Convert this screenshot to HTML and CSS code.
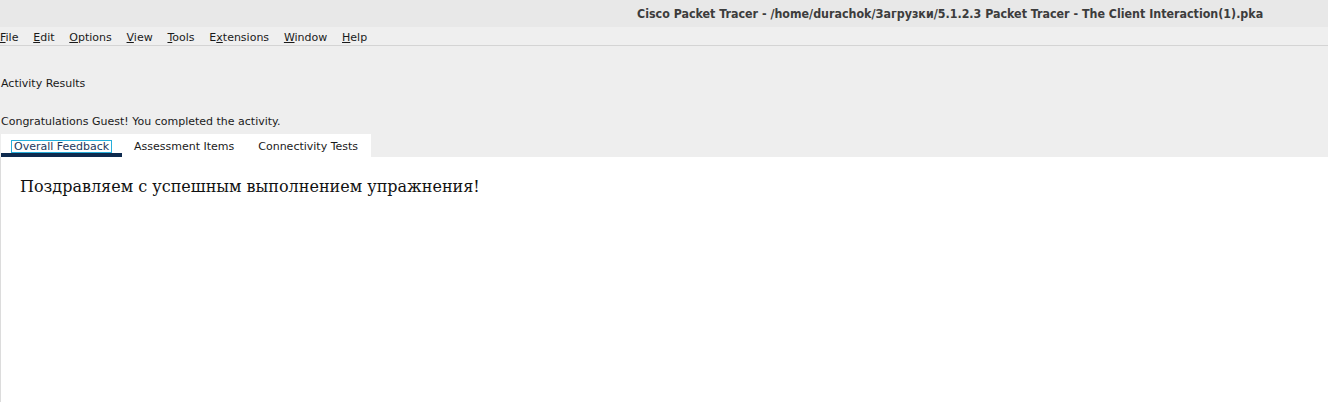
FILE: index.html
```html
<!DOCTYPE html>
<html lang="ru">
<head>
<meta charset="utf-8">
<title>Cisco Packet Tracer</title>
<link rel="stylesheet" href="styles.css">
</head>
<body>
<div class="window">
  <header class="titlebar">
    <span class="title">Cisco Packet Tracer - /home/durachok/Загрузки/5.1.2.3 Packet Tracer - The Client Interaction(1).pka</span>
  </header>
  <nav class="menubar">
    <span class="menu"><u>F</u>ile</span>
    <span class="menu"><u>E</u>dit</span>
    <span class="menu"><u>O</u>ptions</span>
    <span class="menu"><u>V</u>iew</span>
    <span class="menu"><u>T</u>ools</span>
    <span class="menu">E<u>x</u>tensions</span>
    <span class="menu"><u>W</u>indow</span>
    <span class="menu"><u>H</u>elp</span>
  </nav>
  <main class="content">
    <div class="heading">Activity Results</div>
    <div class="message">Congratulations Guest! You completed the activity.</div>
    <div class="tabs">
      <div class="tab active"><span class="focus">Overall Feedback</span></div>
      <div class="tab">Assessment Items</div>
      <div class="tab">Connectivity Tests</div>
    </div>
    <section class="panel">
      <p class="feedback">Поздравляем с успешным выполнением упражнения!</p>
    </section>
  </main>
</div>
</body>
</html>
```
FILE: styles.css
```css
html, body {
  margin: 0;
  padding: 0;
  width: 1328px;
  height: 402px;
  overflow: hidden;
  background: #eeeeee;
}
.window {
  display: flex;
  flex-direction: column;
  height: 402px;
  font-family: "DejaVu Sans", sans-serif;
  font-size: 11px;
  color: #1a1a1a;
}
.titlebar {
  height: 27px;
  background: #e8e8e8;
  display: flex;
  align-items: center;
  padding-left: 637px;
}
.title {
  font-family: "DejaVu Sans Condensed", "DejaVu Sans", sans-serif;
  font-weight: bold;
  font-size: 12.35px;
  color: #3c3c3c;
  white-space: nowrap;
}
.menubar {
  height: 19px;
  padding-top: 2px;
  box-sizing: border-box;
  background: #efefef;
  border-bottom: 1px solid #d4d4d4;
  display: flex;
  align-items: center;
}
.menu {
  padding: 0 7.4px;
  white-space: nowrap;
}
.menu:first-child {
  padding-left: 0;
}
.content {
  flex: 1;
  display: flex;
  flex-direction: column;
  background: #eeeeee;
}
.heading {
  margin-top: 31px;
  padding-left: 1px;
  height: 13px;
  line-height: 13px;
}
.message {
  margin-top: 25px;
  padding-left: 1px;
  height: 13px;
  line-height: 13px;
}
.tabs {
  margin-top: 6px;
  margin-left: 1px;
  width: 370px;
  height: 23px;
  background: #ffffff;
  display: flex;
}
.tab {
  padding: 5px 12px 0;
  display: flex;
  align-items: center;
  white-space: nowrap;
  border-bottom: 4px solid transparent;
  box-sizing: border-box;
}
.tab.active {
  width: 121px;
  padding-left: 10px;
  padding-right: 0;
  border-bottom-color: #0e2a4e;
  color: #223a5e;
}
.focus {
  border: 1px solid #27aedb;
  padding: 0 2px;
  line-height: 11px;
}
.panel {
  flex: 1;
  background: #ffffff;
  border-left: 1px solid #dcdcdc;
}
.feedback {
  margin: 20px 0 0 19px;
  font-family: "DejaVu Serif", serif;
  font-size: 16px;
  color: #111111;
}
```
